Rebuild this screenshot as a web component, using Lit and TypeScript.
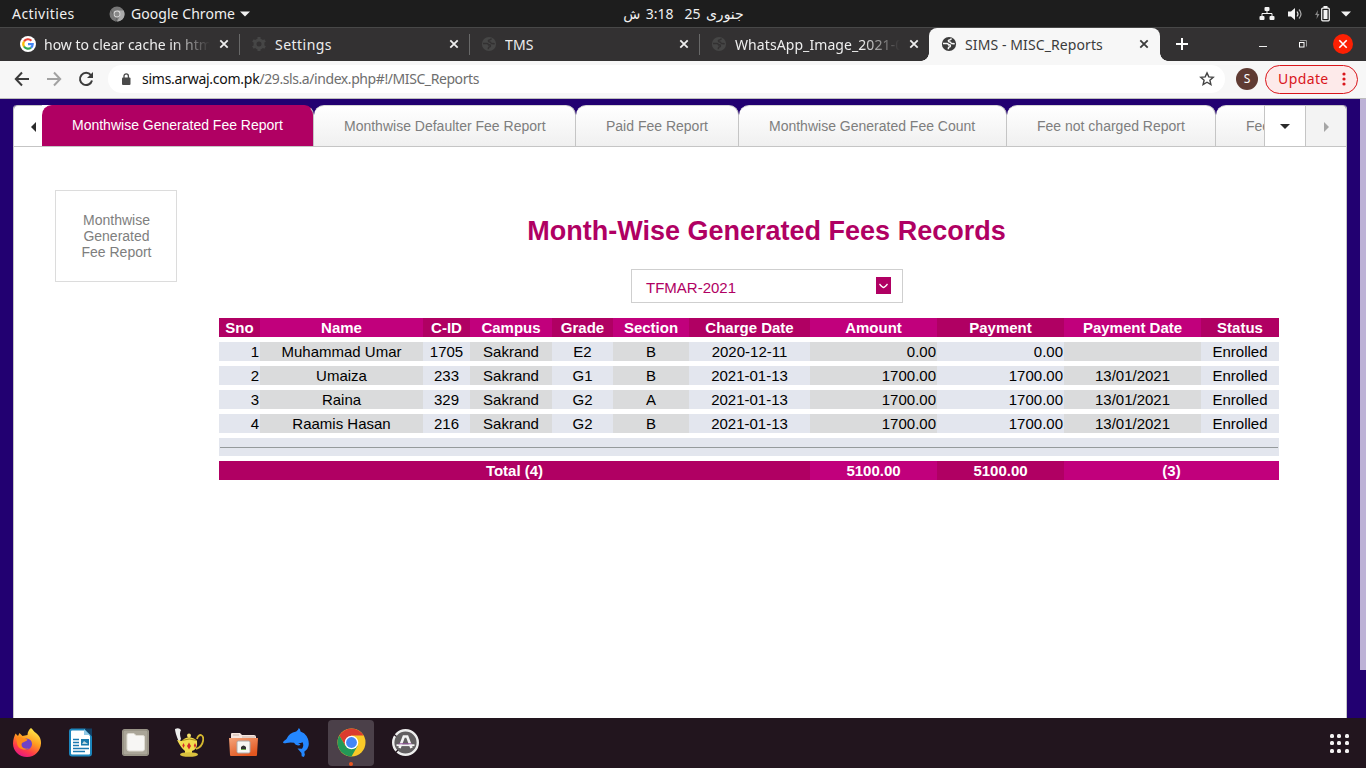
import { LitElement, html, css, svg } from "lit";
import { customElement } from "lit/decorators.js";
import { classMap } from "lit/directives/class-map.js";

const closeX = html`<svg class="close" width="10" height="10" viewBox="0 0 10 10"><path d="M1.3 1.3l7.4 7.4M8.7 1.3L1.3 8.7" stroke="currentColor" stroke-width="1.8" fill="none"/></svg>`;

const globe = html`<svg width="16" height="16" viewBox="0 0 16 16"><circle cx="8" cy="8" r="7.100" fill="currentColor"/><path d="M2 7.600h4q1.200 0 1.600 1.300 1.800-.3 1.800 1 0 .8-1.200 1-.8.200-.8 1.100v1.300" fill="none" stroke="var(--land)" stroke-width="1.500"/><path d="M10.500 2.600Q10 3.900 8.500 3.900q-1.200 0-1.100 1.100.1.900 1.400 1 1 .1 1.300 1 .3.800 1.500.6 1-.2 2 .6" fill="none" stroke="var(--land)" stroke-width="1.500"/></svg>`;

const googleG = html`<svg width="16" height="16" viewBox="0 0 16 16"><circle cx="8" cy="8" r="8" fill="#fff"/><g fill="none" stroke-width="2.200"><path d="M4 5.500A4.700 4.700 0 0 1 11.400 4.700" stroke="#ea4335"/><path d="M4.100 10.600A4.700 4.700 0 0 1 4 5.500" stroke="#fbbc05"/><path d="M11 11.600A4.700 4.700 0 0 1 4 10.500" stroke="#34a853"/><path d="M8 8.200h4.700A4.700 4.700 0 0 1 11 11.700" stroke="#4285f4"/></g></svg>`;

const gear = html`<svg width="16" height="16" viewBox="0 0 16 16"><circle cx="8" cy="8" r="4" fill="none" stroke="currentColor" stroke-width="3"/><g stroke="currentColor" stroke-width="3"><path d="M8 1v3M8 12v3M1.900 4.500l2.600 1.500M11.500 10l2.600 1.500M1.900 11.500l2.600-1.500M11.500 6l2.600-1.500"/></g></svg>`;

@customElement("system-bar")
class SystemBar extends LitElement {
  static styles = css`
    :host { display: flex; align-items: center; justify-content: space-between; height: 27px; background: #1d1d1d; color: #f0f0f0; font: 14px/27px "Noto Sans", sans-serif; }
    .side { display: flex; align-items: center; width: 559px; }
    .left { padding-left: 12px; }
    .act { width: 97px; letter-spacing: .44px; }
    .app { letter-spacing: .05px; padding-left: 6px; width: 104px; white-space: nowrap; }
    .caret { margin-left: 5px; }
    .clock { font-family: "Noto Sans", "DejaVu Sans", sans-serif; direction: rtl; white-space: pre; word-spacing: 1.800px; margin-left: 4px; }
    .right { justify-content: flex-end; padding-right: 15px; }
    .net { margin-right: 13px; } .vol { margin-right: 12px; } .bat { margin-right: 11px; }
    svg { display: block; flex: none; }
  `;
  render() {
    return html`
      <div class="side left">
        <span class="act">Activities</span>
        <svg width="16" height="16" viewBox="0 0 16 16"><circle cx="8" cy="8" r="7.500" fill="#777"/><path d="M8 4.500h6.700A7.500 7.500 0 0 1 8 15.500l3-5.700z" fill="#aaa"/><path d="M2 4l3 5.500 3 2-1.500 4" stroke="#606060" fill="none"/><circle cx="8" cy="8" r="3.400" fill="#ddd"/><circle cx="8" cy="8" r="2.500" fill="#888"/></svg>
        <span class="app">Google Chrome</span>
        <svg class="caret" width="10" height="6" viewBox="0 0 10 6"><path d="M0 .5h10L5 5.500z" fill="#f2f2f2"/></svg>
      </div>
      <span class="clock">جنوری 25  3:18 ش</span>
      <div class="side right">
        <svg class="net" width="16" height="14" viewBox="0 0 16 14"><g fill="#f4f4f4"><rect x="5.500" y="0" width="5" height="4" rx="1"/><rect x="0.500" y="9" width="5" height="4" rx="1"/><rect x="10.500" y="9" width="5" height="4" rx="1"/></g><path d="M8 3v3.500M3 9.500v-3h10v3" fill="none" stroke="#f4f4f4"/></svg>
        <svg class="vol" width="15" height="14" viewBox="0 0 15 14"><path d="M0 4.500h3L7 1v12L3 9.500H0z" fill="#f4f4f4"/><path d="M9 4.500q2 2.500 0 5" stroke="#ddd" fill="none" stroke-width="1.200"/><path d="M11 2.500q4 4.500 0 9" stroke="#aaa" fill="none" stroke-width="1.200"/></svg>
        <svg class="bat" width="15" height="16" viewBox="0 0 15 16"><path d="M3 4L0 9h2l-.5 4L4.500 8h-2z" fill="#888"/><rect x="6.700" y="2.200" width="7.600" height="12.600" rx="1" fill="none" stroke="#f4f4f4" stroke-width="1.200"/><rect x="8.500" y="4" width="4" height="9" fill="#f4f4f4"/><rect x="8.500" y="0" width="4" height="2" fill="#f4f4f4"/></svg>
        <svg width="10" height="6" viewBox="0 0 10 6"><path d="M0 .5h10L5 5.500z" fill="#f2f2f2"/></svg>
      </div>`;
  }
}

@customElement("tab-strip")
class TabStrip extends LitElement {
  static styles = css`
    :host { display: flex; box-sizing: border-box; height: 34px; background: #333132; border-top: 1px solid #484848; color: #eee; font: 14px/31px "Noto Sans", sans-serif; --land: #333132; }
    .tab { display: flex; align-items: center; box-sizing: border-box; width: 230px; padding: 0 10px 1px 11px; border-right: 1px solid transparent; background: linear-gradient(#686868, #686868) right 6px / 1px 21px no-repeat; background-origin: border-box; }
    .tab.first { width: 240px; padding-left: 20px; }
    .tab.last { width: 229px; padding-right: 9px; background: none; }
    .icon { display: flex; width: 24px; flex: none; color: #464646; }
    .title { flex: 1; min-width: 0; overflow: hidden; white-space: nowrap; margin-right: 9px; }
    .fade { -webkit-mask-image: linear-gradient(90deg, #000 calc(100% - 38px), transparent); mask-image: linear-gradient(90deg, #000 calc(100% - 38px), transparent); }
    .close { flex: none; }
    .active { position: relative; width: 231px; padding: 0 11px 1px 12px; background: #f7f7f7; border: 0; border-radius: 8px 8px 0 0; color: #3b3b3b; --land: #f7f7f7; }
    .active .icon { color: #3b3b3b; }
    .active::before, .active::after { content: ""; position: absolute; bottom: 0; width: 8px; height: 8px; }
    .active::before { right: 100%; background: radial-gradient(circle at 0 0, transparent 7.500px, #f7f7f7 8px); }
    .active::after { left: 100%; background: radial-gradient(circle at 100% 0, transparent 7.500px, #f7f7f7 8px); }
    .t0 { letter-spacing: -.02px; } .t1 { letter-spacing: .47px; } .t2 { letter-spacing: .1px; } .t3 { letter-spacing: .08px; } .t4 { letter-spacing: .1px; }
    .controls { display: flex; align-items: center; flex: 1; padding: 0 0 1px 16px; }
    .plus { margin-right: 71px; } .min { margin-right: 31px; } .max { margin-right: 26px; }
    svg { display: block; flex: none; }
  `;
  tabs = [
    { icon: googleG, title: "how to clear cache in html", fade: true },
    { icon: gear, title: "Settings", fade: false },
    { icon: globe, title: "TMS", fade: false },
    { icon: globe, title: "WhatsApp_Image_2021-01", fade: true },
    { icon: globe, title: "SIMS - MISC_Reports", fade: false },
  ];
  render() {
    return html`${this.tabs.map((t, i) => html`
      <div class=${classMap({ tab: true, first: i === 0, last: i === 3, active: i === 4 })}>
        <span class="icon">${t.icon}</span>
        <span class=${classMap({ title: true, fade: t.fade, ["t" + i]: true })}>${t.title}</span>${closeX}
      </div>`)}
      <div class="controls">
        <svg class="plus" width="12" height="12" viewBox="0 0 12 12"><path d="M6 0v12M0 6h12" stroke="#fff" stroke-width="2"/></svg>
        <svg class="min" width="8" height="8" viewBox="0 0 8 8"><path d="M0 6.500h8" stroke="#eee"/></svg>
        <svg class="max" width="9" height="8" viewBox="0 0 9 8"><path d="M2 .5h6.500v6" stroke="#999" fill="none"/><rect x="1.500" y="2.500" width="4.500" height="4.500" stroke="#fff" fill="none"/></svg>
        <svg width="20" height="20" viewBox="0 0 20 20"><circle cx="10" cy="10" r="10" fill="#fc2003"/><path d="M6.300 6.300l7.400 7.400M13.700 6.300l-7.400 7.400" stroke="#fff" stroke-width="1.600"/></svg>
      </div>`;
  }
}

@customElement("address-bar")
class AddressBar extends LitElement {
  static styles = css`
    :host { display: flex; align-items: center; box-sizing: border-box; height: 38px; padding: 0 8px 2px 14px; background: #f7f7f7; border-bottom: 1px solid #bcbcbc; font: 14px/28px "Noto Sans", sans-serif; }
    .nav { display: flex; gap: 16px; width: 94px; }
    .url { display: flex; align-items: center; box-sizing: border-box; width: 1117px; height: 28px; border-radius: 14px; background: #fff; padding: 0 10px 0 13px; color: #6e6e6e; }
    .text { flex: 1; padding-left: 11px; letter-spacing: -.42px; }
    .host { color: #111; letter-spacing: -.26px; }
    .avatar { width: 22px; height: 22px; margin: 0 7px 0 11px; border-radius: 50%; background: #5f3b33; color: #fff; text-align: center; font: 12px/22px "Noto Sans", sans-serif; flex: none; }
    .update { display: flex; align-items: center; justify-content: space-between; box-sizing: border-box; width: 93px; height: 29px; margin-top: 1px; padding: 0 11px 0 12px; border: 1px solid #d9151b; border-radius: 15px; background: #fdeaea; color: #d9151b; letter-spacing: .4px; }
    svg { display: block; flex: none; }
  `;
  render() {
    return html`
      <div class="nav">
        <svg width="16" height="16" viewBox="0 0 16 16"><path d="M15 8H2M8 1.500L1.800 8 8 14.500" stroke="#3c3c3c" stroke-width="2" fill="none"/></svg>
        <svg width="16" height="16" viewBox="0 0 16 16"><path d="M1 8h13M8 1.500L14.200 8 8 14.500" stroke="#a2a2a2" stroke-width="2" fill="none"/></svg>
        <svg width="16" height="16" viewBox="0 0 16 16"><path d="M12.900 4.200A6.100 6.100 0 1 0 14 9.500" stroke="#3c3c3c" stroke-width="2" fill="none"/><path d="M15 1v6H9z" fill="#3c3c3c"/></svg>
      </div>
      <div class="url">
        <svg width="10" height="12" viewBox="0 0 10 12"><rect x="1" y="4.500" width="8.500" height="7.500" rx="1" fill="#4a4a4a"/><path d="M3 5V3a2.200 2.200 0 0 1 4.400 0v2" stroke="#4a4a4a" stroke-width="1.300" fill="none"/></svg>
        <span class="text"><span class="host">sims.arwaj.com.pk</span>/29.sls.a/index.php#!/MISC_Reports</span>
        <svg width="16" height="16" viewBox="0 0 16 16"><path d="M8 1.900l1.800 4 4.400.4-3.300 2.900 1 4.300L8 11.200l-3.900 2.300 1-4.300-3.300-2.900 4.400-.4z" fill="none" stroke="#444" stroke-width="1.400"/></svg>
      </div>
      <div class="avatar">S</div>
      <div class="update"><span>Update</span><svg width="4" height="14" viewBox="0 0 4 14"><g fill="#d9151b"><circle cx="2" cy="2" r="1.600"/><circle cx="2" cy="7" r="1.600"/><circle cx="2" cy="12" r="1.600"/></g></svg></div>`;
  }
}

@customElement("report-tabs")
class ReportTabs extends LitElement {
  static styles = css`
    :host { display: flex; box-sizing: border-box; height: 42px; border-bottom: 1px solid #c5c5c5; font: 14px/40px "Liberation Sans", Arial, sans-serif; color: #7e7e7e; }
    .prev, .more, .next { display: flex; align-items: center; justify-content: center; box-sizing: border-box; flex: none; background: #fff; border-top: 1px solid #c5c5c5; }
    .prev { width: 28px; justify-content: flex-end; padding: 2px 6px 0 0; border-radius: 4px 0 0; }
    .tabs { display: flex; flex: 1; min-width: 0; overflow: hidden; background: linear-gradient(90deg, #fff 14px, transparent 14px); }
    .tab { box-sizing: border-box; flex: none; padding-left: 30px; white-space: nowrap; border-top: 1px solid #d5d5d5; border-right: 1px solid #c5c5c5; border-radius: 10px 10px 0 0; background: linear-gradient(#fff, #f0f0f0); }
    .on { background: #b00063; border-top-color: #b00063; color: #fff; line-height: 38px; }
    .more { width: 42px; border-left: 1px solid #c5c5c5; border-right: 1px solid #c5c5c5; }
    .next { width: 40px; padding-top: 2px; background: #f3f3f3; border-radius: 0 4px 0 0; }
  `;
  tabs: [string, number][] = [
    ["Monthwise Generated Fee Report", 272],
    ["Monthwise Defaulter Fee Report", 262],
    ["Paid Fee Report", 163],
    ["Monthwise Generated Fee Count", 268],
    ["Fee not charged Report", 209],
    ["Fee Defaulter Report", 200],
  ];
  render() {
    return html`
      <div class="prev"><svg width="5" height="10" viewBox="0 0 5 10"><path d="M5 0v10L0 5z" fill="#2b2b2b"/></svg></div>
      <div class="tabs">${this.tabs.map(([t, w], i) => html`<div class=${classMap({ tab: true, on: i === 0 })} style="width:${w}px">${t}</div>`)}</div>
      <div class="more"><svg width="10" height="5" viewBox="0 0 10 5"><path d="M0 0h10L5 5z" fill="#2b2b2b"/></svg></div>
      <div class="next"><svg width="5" height="10" viewBox="0 0 5 10"><path d="M0 0v10l5-5z" fill="#a5a5a5"/></svg></div>`;
  }
}

@customElement("fee-table")
class FeeTable extends LitElement {
  static styles = css`
    :host { display: grid; grid-template-columns: 41px 163px 47px 82px 61px 76px 121px 127px 127px 137px 78px; row-gap: 5px; width: 1060px; font: 15px/17px "Liberation Sans", Arial, sans-serif; color: #000; }
    div { box-sizing: border-box; height: 19px; padding: 1px; text-align: center; white-space: nowrap; background: #e3e6ee; }
    .alt { background: #dadbdc; }
    .head { background: #b00063; color: #fff; font-weight: bold; }
    .head.alt { background: #c1007c; }
    .num { text-align: right; }
    .rule { grid-column: 1 / -1; height: 18px; padding: 9px 1px 8px; }
    .rule hr { height: 1px; margin: 0; border: 0; background: #959a9c; }
    .total { grid-column: span 7; }
    .wide { grid-column: span 2; }
  `;
  heads = ["Sno", "Name", "C-ID", "Campus", "Grade", "Section", "Charge Date", "Amount", "Payment", "Payment Date", "Status"];
  rows = [
    ["1", "Muhammad Umar", "1705", "Sakrand", "E2", "B", "2020-12-11", "0.00", "0.00", "", "Enrolled"],
    ["2", "Umaiza", "233", "Sakrand", "G1", "B", "2021-01-13", "1700.00", "1700.00", "13/01/2021", "Enrolled"],
    ["3", "Raina", "329", "Sakrand", "G2", "A", "2021-01-13", "1700.00", "1700.00", "13/01/2021", "Enrolled"],
    ["4", "Raamis Hasan", "216", "Sakrand", "G2", "B", "2021-01-13", "1700.00", "1700.00", "13/01/2021", "Enrolled"],
  ];
  render() {
    return html`
      ${this.heads.map((h, i) => html`<div class=${classMap({ head: true, alt: i % 2 === 1 })}>${h}</div>`)}
      ${this.rows.map((r) => r.map((c, i) => html`<div class=${classMap({ alt: i % 2 === 1, num: i === 0 || i === 7 || i === 8 })}>${c}</div>`))}
      <div class="rule"><hr></div>
      <div class="head total">Total (4)</div><div class="head alt">5100.00</div><div class="head">5100.00</div><div class="head alt wide">(3)</div>`;
  }
}

@customElement("app-dock")
class AppDock extends LitElement {
  static styles = css`
    :host { display: flex; align-items: center; box-sizing: border-box; height: 50px; padding: 0 9px 0 4px; background: #22151e; }
    .item { display: flex; align-items: center; justify-content: center; box-sizing: border-box; width: 46px; height: 46px; padding: 0 0 1px; margin-right: 8px; border-radius: 4px; flex: none; }
    .on { position: relative; background: #4b4049; }
    .on::after { content: ""; position: absolute; left: 21px; bottom: 0; width: 4px; height: 4px; border-radius: 50%; background: #e95420; }
    .grid { display: grid; grid-template-columns: repeat(3, 4px); gap: 3.500px; margin: 0 8.500px 0 auto; }
    .grid i { width: 4px; height: 4px; border-radius: 1.500px; background: #f4f2f3; }
  `;
  icons = [
    svg`<defs><linearGradient id="f" x1=".8" y1="0" x2=".3" y2="1"><stop offset="0" stop-color="#fff44f"/><stop offset=".45" stop-color="#ff9a1f"/><stop offset=".75" stop-color="#ff3d47"/><stop offset="1" stop-color="#e31587"/></linearGradient></defs><path d="M18 0c2 1.500 3 4 5 5 4 3 5.200 7 5 10.500C27.500 23 22 29 14 29S0 23 0 15.500C0 11 1.500 8 2.500 5.500L5 8l1.500-3 3 3 5-1c0-3 1.500-5.500 3.500-7z" fill="url(#f)"/><circle cx="13.500" cy="16" r="5.500" fill="#7142c8"/><path d="M3 9c5-1 6 2 9 2 2 0 3 0 2 1.500L9 15c-2 4 3 7 7 5-5 4-12 0-12-5z" fill="#ff8a1a"/>`,
    svg`<path d="M4 1.500h14l6 6v18q0 2-2 2H5q-2 0-2-2v-22q0-2 2-2z" fill="#fff" stroke="#1c86bd" stroke-width="2"/><path d="M17 .500h8v8z" fill="#123f63"/><path d="M17 1v6h6z" fill="#91c9e6"/><path d="M6 11.500h6M6 14.500h6M6 17.500h6M6 20.500h16M6 23.500h12" stroke="#1c79b0" stroke-width="1.500"/><rect x="14" y="11" width="8" height="6.500" fill="#1879ad"/><path d="M15 16l2-3 4 3z" fill="#bdd7df"/>`,
    svg`<rect x="1" y="1" width="27" height="27" rx="3" fill="#aaa598"/><rect x="2" y="2" width="25" height="25" rx="2" fill="none" stroke="#8a8578"/><path d="M6 7q0-1.500 1.500-1.500H13l2 2h7q1.500 0 1.500 1.500v12q0 2-2 2H8q-2 0-2-2z" fill="#f7f6f4" stroke="#dedbd2"/>`,
    svg`<path d="M4 14Q0 5 0 1q4-2 6 1-2 3 0 9z" fill="#ededed"/><path d="M22 11q1-4 4-4 3 1 2 6-1 6-7 8" fill="none" stroke="#d5b72f" stroke-width="1.800"/><path d="M2 12l5 1q2-3 7-4 6 1 8 4 1 8-5 10v3H10v-3Q6 20 2 12z" fill="#f2dc4e"/><ellipse cx="14" cy="26.500" rx="9" ry="2.300" fill="#dbc13e"/><circle cx="14" cy="7.500" r="2" fill="#f6e36c"/><path d="M7 12.500q7-3 15 0" stroke="#a68c1d" fill="none"/><path d="M14 14.500l2 3.500-2 3.500-2-3.500zM8.500 15l1.200 2.500-1.200 2.500-1.200-2.500zM20 15l1.200 2.500-1.200 2.500-1.200-2.500z" fill="#d52b2b"/>`,
    svg`<path d="M2 6q0-1 1-1h8l2 2h12q2 0 2 2v6H2z" fill="#f7e6df"/><path d="M4 7h6M13 9h13" stroke="#cbb4aa"/><linearGradient id="o" x1="0" y1="0" x2=".6" y2="1"><stop offset="0" stop-color="#f4a47a"/><stop offset="1" stop-color="#e2561f"/></linearGradient><path d="M0 10h29l-1 17q0 1-1 1H2q-1 0-1-1z" fill="url(#o)"/><rect x="8" y="13" width="13" height="12" rx="1.500" fill="#f7f6f3" stroke="#aaa"/><path d="M12 21v-2q2.500-3 5 0v2z" fill="#333"/><path d="M12 21.500h5" stroke="#6aa94d"/>`,
    svg`<path d="M15.800 0q1.500.500 1.700 3.500 4 1 6 4.500 3 5 2 10-.8 4-4.200 5.800.2 1.600.6 3l-1 2.200-2.200-.8-.3-3.200-3.900-4.400 4.500.1q2.200-2.800.6-6.500-1.800 1-4.600.9 2 .7 2.500 1.900-4.500 1.500-6.500-2.200-4-.6-7.500.2-1.800.6-3.500-.3 0-1.300 3.500-3.700Q6 4.500 13.200 3.400 15.500 2 15.800 0z" fill="#2487ff"/>`,
    svg`<circle cx="14.500" cy="14.500" r="14" fill="#f9c928"/><path d="M2.400 7.500A14 14 0 0 1 26.600 7.500H14.500l-6 10.500z" fill="#db3c2e"/><path d="M2.400 7.500A14 14 0 0 0 14.500 28.500l6-10.500-12 0z" fill="#239957"/><circle cx="14.500" cy="14.500" r="6.800" fill="#fff"/><circle cx="14.500" cy="14.500" r="5.400" fill="#4386f5"/>`,
    svg`<circle cx="14.500" cy="14.500" r="12.300" fill="#625f61" stroke="#eee" stroke-width="2.400"/><path d="M2.500 6l3 2.500M4 25l3-3" stroke="#22151e" stroke-width="1.300"/><path d="M8.500 20l4.300-11.500h3.400L20.500 20" fill="none" stroke="#f4f4f4" stroke-width="2.600"/><path d="M5.500 17.200h18" stroke="#f4f4f4" stroke-width="1.800"/><path d="M7.500 15.800h13" stroke="#92529b"/>`,
  ];
  render() {
    return html`${this.icons.map((ic, i) => html`<div class=${classMap({ item: true, on: i === 6 })}><svg width="29" height="29" viewBox="0 0 29 29">${ic}</svg></div>`)}
      <div class="grid">${Array.from({ length: 9 }, () => html`<i></i>`)}</div>`;
  }
}

@customElement("app-root")
class AppRoot extends LitElement {
  static styles = css`
    :host { display: flex; flex-direction: column; width: 1366px; height: 768px; overflow: hidden; font-family: "Liberation Sans", Arial, sans-serif; }
    .page { display: flex; flex: 1; min-height: 0; background: #220071; overflow: hidden; padding-left: 13px; }
    .panel { box-sizing: border-box; width: 1334px; margin: 6px 13px 0 0; border: solid #c5c5c5; border-width: 0 1px; border-radius: 4px 4px 0 0; background: linear-gradient(transparent 41px, #fff 41px); }
    .thumb { width: 6px; height: 571px; background: #bdb2d6; }
    .body { display: flex; padding: 43px 0 0 41px; }
    .card { display: flex; align-items: center; justify-content: center; box-sizing: border-box; width: 122px; height: 92px; border: 1px solid #dcdcdc; color: #7e7e7e; font-size: 14px; line-height: 16px; text-align: center; }
    .card span { width: 75px; padding-left: 1px; }
    .main { margin-left: 42px; width: 1096px; padding-top: 24px; }
    h1 { margin: 0; width: 1095px; color: #b00063; font-size: 27px; line-height: 34px; text-align: center; }
    .select { display: flex; justify-content: space-between; box-sizing: border-box; width: 272px; height: 34px; margin: 21px 0 15px 412px; padding: 7px 11px 0 14px; border: 1px solid #cfcfcf; color: #b00063; font-size: 15px; line-height: 21px; }
    .arrow { width: 15px; height: 17px; background: #b00063; }
  `;
  render() {
    return html`
      <system-bar></system-bar>
      <tab-strip></tab-strip>
      <address-bar></address-bar>
      <div class="page">
        <div class="panel">
          <report-tabs></report-tabs>
          <div class="body">
            <div class="card"><span>Monthwise Generated Fee Report</span></div>
            <div class="main">
              <h1>Month-Wise Generated Fees Records</h1>
              <div class="select"><span>TFMAR-2021</span><svg class="arrow" viewBox="0 0 15 17"><path d="M3.500 7q3 3.500 4 3.500T11.500 7" stroke="#fff" stroke-width="1.300" fill="none"/></svg></div>
              <fee-table></fee-table>
            </div>
          </div>
        </div>
        <div class="thumb"></div>
      </div>
      <app-dock></app-dock>`;
  }
}
